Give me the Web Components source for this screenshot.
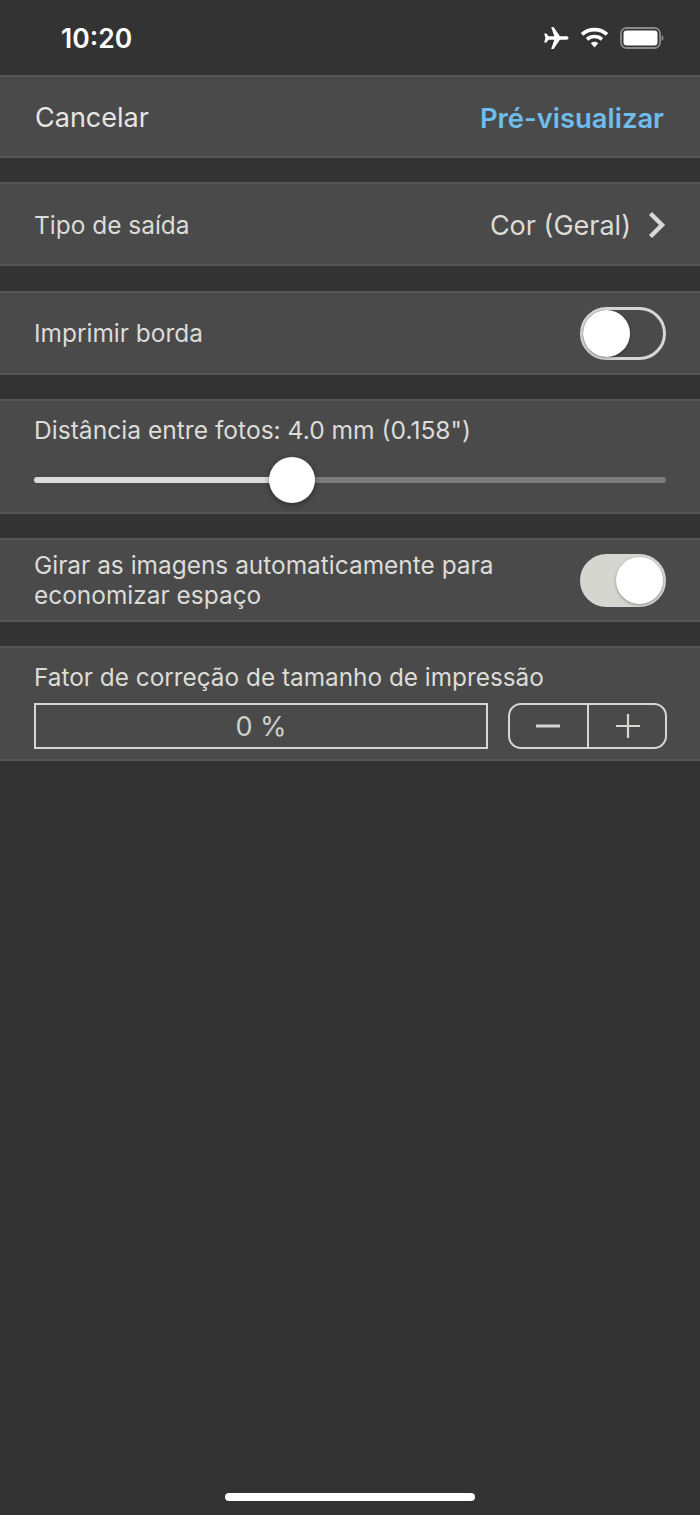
<!DOCTYPE html>
<html lang="pt">
<head>
<meta charset="utf-8">
<title>Configurações de impressão</title>
<style>
  html, body { margin: 0; height: 100%; background: #333333; }
  body { display: flex; flex-direction: column; height: 1515px; font-family: Inter, "Liberation Sans", sans-serif; color: #dcdcd8; overflow: hidden; }
  .grupo { margin-top: 24px; }
  .grupo.maior { margin-top: 25px; }
  .desce { padding-top: 2px; }
  .texto { font-size: 24.45px; letter-spacing: 0; }
</style>
</head>
<body>
<barra-status></barra-status>
<barra-nav></barra-nav>

<linha-ajuste class="grupo desce" altura="84">
  <span class="texto">Tipo de saída</span>
  <valor-seta slot="direita">Cor (Geral)</valor-seta>
</linha-ajuste>

<linha-ajuste class="grupo maior" altura="84">
  <span class="texto">Imprimir borda</span>
  <chave-ios slot="direita"></chave-ios>
</linha-ajuste>

<ajuste-slider class="grupo"></ajuste-slider>

<linha-ajuste class="grupo" altura="84">
  <span class="texto" style="display:block;line-height:30px">Girar as imagens automaticamente para<br>economizar espaço</span>
  <chave-ios slot="direita" ligada></chave-ios>
</linha-ajuste>

<ajuste-fator class="grupo"></ajuste-fator>

<barra-home></barra-home>

<script>
class BarraStatus extends HTMLElement {
  connectedCallback() {
    const shadow = this.attachShadow({ mode: 'open' });
    shadow.innerHTML = `
    <style>
      :host { display: flex; align-items: center; justify-content: space-between; height: 75px; box-sizing: border-box; padding: 0 36px 0 61px; background: #333333; flex: none; }
      .hora { font-size: 26.5px; font-weight: 600; color: #fff; }
      .icones { display: flex; align-items: center; gap: 11px; }
      svg { display: block; }
    </style>
    <span class="hora">10:20</span>
    <div class="icones">
      <!-- aviao -->
      <svg width="26" height="24" viewBox="0 0 26 24">
        <path fill="#fff" d="M25.5 12c0-1.1-1-1.7-2.2-1.7h-6.4L10.6 1H8.2l3.1 9.3H5.6L3.4 7.6H1.2l1.2 4.4-1.2 4.4h2.2l2.2-2.7h5.7L8.2 23h2.4l6.3-9.3h6.4c1.2 0 2.2-.6 2.2-1.7z"/>
      </svg>
      <!-- wifi -->
      <svg width="29" height="21" viewBox="0 0 29 21">
        <g fill="none" stroke="#fff" stroke-width="3.6">
          <path d="M2 7.4C9 1 20 1 27 7.4"/>
          <path d="M7 12.4c4.4-3.8 10.6-3.8 15 0"/>
        </g>
        <path fill="#fff" d="M10.8 16.2c2.2-1.8 5.2-1.8 7.4 0l-3.7 4.2z"/>
      </svg>
      <!-- bateria -->
      <svg width="44" height="22" viewBox="0 0 44 22">
        <rect x="1" y="1" width="39" height="20" rx="5.5" fill="none" stroke="#8a8a8a" stroke-width="1.8"/>
        <rect x="3.5" y="3.5" width="34" height="15" rx="3.2" fill="#fff"/>
        <path d="M41.5 8v6c1.2-.4 2-1.6 2-3s-.8-2.6-2-3z" fill="#8a8a8a"/>
      </svg>
    </div>`;
  }
}
customElements.define('barra-status', BarraStatus);

// estilo comun das franjas claras
const franja = `
  background: #4a4a4a;
  border-top: 2px solid #565656;
  border-bottom: 2px solid #565656;
  box-sizing: border-box;
  flex: none;
`;

class BarraNav extends HTMLElement {
  connectedCallback() {
    const shadow = this.attachShadow({ mode: 'open' });
    shadow.innerHTML = `
    <style>
      :host { display: flex; align-items: center; justify-content: space-between; height: 83px; padding: 2px 36px 0 35px; ${franja} }
      span { font-size: 27px; color: #e6e6e2; }
      .azul { color: #6fbdec; font-weight: 600; font-size: 27.4px; }
    </style>
    <span>Cancelar</span>
    <span class="azul">Pré-visualizar</span>`;
  }
}
customElements.define('barra-nav', BarraNav);

class LinhaAjuste extends HTMLElement {
  connectedCallback() {
    const shadow = this.attachShadow({ mode: 'open' });
    shadow.innerHTML = `
    <style>
      :host { display: flex; align-items: center; justify-content: space-between; height: ${this.getAttribute('altura') || 84}px; padding: 0 34px; ${franja} }
    </style>
    <slot></slot>
    <slot name="direita"></slot>`;
  }
}
customElements.define('linha-ajuste', LinhaAjuste);

class ValorSeta extends HTMLElement {
  connectedCallback() {
    const shadow = this.attachShadow({ mode: 'open' });
    shadow.innerHTML = `
    <style>
      :host { display: flex; align-items: center; gap: 16px; font-size: 27px; color: #dcdcd8; }
      svg { display: block; }
    </style>
    <slot></slot>
    <svg width="19" height="28" viewBox="0 0 19 28">
      <path d="M3.5 2.5l11.5 11.5-11.5 11.5" fill="none" stroke="#d8d8d4" stroke-width="4.4"/>
    </svg>`;
  }
}
customElements.define('valor-seta', ValorSeta);

class ChaveIos extends HTMLElement {
  connectedCallback() {
    const ligada = this.hasAttribute('ligada');
    const shadow = this.attachShadow({ mode: 'open' });
    shadow.innerHTML = `
    <style>
      :host { display: flex; width: 86px; height: 53px; box-sizing: border-box; border-radius: 27px; border: 3px solid #d6d6d2; background: ${ligada ? '#d6d6d0' : 'transparent'}; justify-content: ${ligada ? 'flex-end' : 'flex-start'}; align-items: center; }
      i { display: block; width: 47px; height: 47px; border-radius: 50%; background: #fff; box-shadow: 0 1px 3px rgba(0,0,0,.35); }
    </style>
    <i></i>`;
  }
}
customElements.define('chave-ios', ChaveIos);

class AjusteSlider extends HTMLElement {
  connectedCallback() {
    const shadow = this.attachShadow({ mode: 'open' });
    shadow.innerHTML = `
    <style>
      :host { display: block; height: 115px; padding: 14px 34px 0; ${franja} }
      .rotulo { font-size: 24.6px; line-height: 30px; color: #dcdcd8; }
      .trilho { position: relative; display: flex; height: 6px; margin-top: 32px; }
      .feito { width: 258px; background: #dcdcd8; border-radius: 3px 0 0 3px; }
      .resto { flex: 1; background: #7c7c7c; border-radius: 0 3px 3px 0; }
      .botao { position: absolute; left: 235px; top: -20px; width: 46px; height: 46px; border-radius: 50%; background: #fff; box-shadow: 0 2px 6px rgba(0,0,0,.4); }
    </style>
    <div class="rotulo">Distância entre fotos: 4.0 mm (0.158")</div>
    <div class="trilho"><div class="feito"></div><div class="resto"></div><div class="botao"></div></div>`;
  }
}
customElements.define('ajuste-slider', AjusteSlider);

class AjusteFator extends HTMLElement {
  connectedCallback() {
    const shadow = this.attachShadow({ mode: 'open' });
    shadow.innerHTML = `
    <style>
      :host { display: block; height: 115px; padding: 14px 33px 0 34px; ${franja} }
      .rotulo { font-size: 24.35px; line-height: 30px; color: #dcdcd8; }
      .fila { display: flex; gap: 20px; margin-top: 11px; }
      .campo { flex: 1; height: 46px; box-sizing: border-box; border: 2px solid #d6d6d2; display: flex; align-items: center; justify-content: center; font-size: 27px; color: #cfcfcb; }
      .passo { display: flex; width: 159px; height: 46px; box-sizing: border-box; border: 2px solid #d6d6d2; border-radius: 13px; }
      .passo div { flex: 1; display: flex; align-items: center; justify-content: center; }
      .passo div + div { border-left: 2px solid #d6d6d2; }
      svg { display: block; }
      .mais { margin-left: 2px; }
    </style>
    <div class="rotulo">Fator de correção de tamanho de impressão</div>
    <div class="fila">
      <div class="campo">0 %</div>
      <div class="passo">
        <div><svg width="24" height="24" viewBox="0 0 24 24"><path d="M0 12h24" stroke="#d6d6d2" stroke-width="3"/></svg></div>
        <div><svg class="mais" width="24" height="24" viewBox="0 0 24 24"><path d="M0 12h24M12 0v24" stroke="#d6d6d2" stroke-width="2.2"/></svg></div>
      </div>
    </div>`;
  }
}
customElements.define('ajuste-fator', AjusteFator);

class BarraHome extends HTMLElement {
  connectedCallback() {
    const shadow = this.attachShadow({ mode: 'open' });
    shadow.innerHTML = `
    <style>
      :host { display: flex; justify-content: center; margin-top: auto; padding-bottom: 14px; }
      i { display: block; width: 250px; height: 8px; border-radius: 4px; background: #fff; }
    </style>
    <i></i>`;
  }
}
customElements.define('barra-home', BarraHome);
</script>
</body>
</html>
